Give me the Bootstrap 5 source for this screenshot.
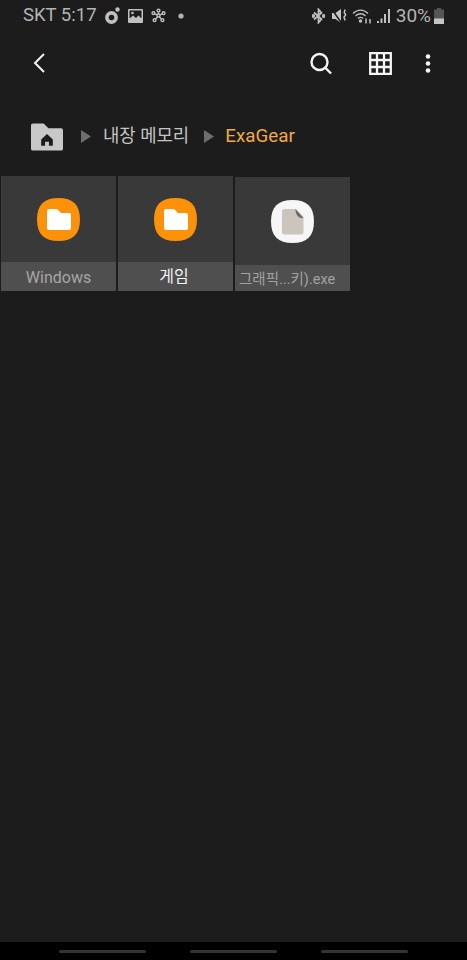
<!DOCTYPE html>
<html lang="ko">
<head>
  <meta charset="UTF-8">
  <title>내장 메모리 - ExaGear</title>
  <link href="https://cdn.jsdelivr.net/npm/bootstrap@5.3.3/dist/css/bootstrap.min.css" rel="stylesheet">
  <style>
    html, body { background: #1c1c1c; }
    body { font-family: Roboto, "Noto Sans CJK KR", sans-serif; }
    svg { display: block; flex: none; }
    .phone { width: 467px; height: 960px; overflow: hidden; }
    .status-bar { height: 31px; padding: 0 23px; color: #b4b4b4; font-size: 18.5px; line-height: 31px; }
    .status-left { gap: 8px; }
    .sr-mute { margin-left: 7px; }
    .sr-wifi { margin-left: 5px; }
    .sr-signal { margin-left: 5px; }
    .sr-pct { margin-left: 6px; font-size: 19px; }
    .sr-batt { margin-left: 3px; }
    .tool-bar { height: 64px; padding: 0 36px 0 33px; }
    .tool-grid { margin: 0 33px 0 37px; }
    .crumbs { height: 41px; margin-top: 21px; padding-left: 31px; font-size: 17.8px; color: #c4c4c4; }
    .crumb-arrow { margin: 0 12px 0 18px; }
    .crumb-arrow-2 { margin: 0 11px 0 15px; }
    .crumb-now { color: #f0a94a; font-size: 18.8px; }
    .tile-row { margin-top: 19px; padding-left: 1px; gap: 2px; }
    .tile { width: 115px; height: 115px; background: #393939; }
    .tile-low { height: 114px; margin-top: 1px; }
    .tile-label { height: 29px; background: #4f4f4f; color: #a6a6a6; font-size: 16px; line-height: 31px; text-align: center; white-space: nowrap; }
    .tile-low .tile-label { height: 26px; line-height: 29px; font-size: 14.5px; color: #a2a2a2; text-align: left; padding-left: 4px; }
    .tile-label-on { color: #f2f2f2; line-height: 29px; padding-right: 3px; }
    .nav-strip { height: 18px; background: #000; padding: 0 59px; }
    .nav-line { width: 87px; height: 3px; border-radius: 2px; background: #333; margin-top: 8px; }
  </style>
</head>
<body>

<div class="phone d-flex flex-column">

  <!-- status bar -->
  <div class="status-bar d-flex justify-content-between align-items-center">
    <div class="status-left d-flex align-items-center">
      <span>SKT 5:17</span>
      <svg width="15" height="17" viewBox="0 0 15 17"><circle cx="6.500" cy="10.500" r="4.600" fill="none" stroke="#c0c0c0" stroke-width="3.600"/><circle cx="12.500" cy="2.500" r="2.200" fill="#c0c0c0"/></svg>
      <svg width="15" height="14" viewBox="0 0 15 14"><rect width="15" height="14" rx="1" fill="#c0c0c0"/><rect x="1.500" y="1.500" width="12" height="7.500" fill="#1c1c1c"/><circle cx="4.500" cy="4" r="1.300" fill="#c0c0c0"/><path d="M1 10 5 6.500 8 9 10.500 6.500 14 10Z" fill="#c0c0c0"/></svg>
      <svg width="15" height="15" viewBox="0 0 16 15" fill="none" stroke="#c0c0c0" stroke-width="1.500"><circle cx="8" cy="7.500" r="1.600"/><circle cx="8" cy="2.200" r="1.500"/><circle cx="2.600" cy="5" r="1.500"/><circle cx="13.400" cy="5" r="1.500"/><circle cx="3.800" cy="12.500" r="1.500"/><circle cx="12.200" cy="12.500" r="1.500"/><path d="M8 4v2M4 5.800l2.600 1M12 5.800l-2.600 1M5 11.400l2-2.500M11 11.400l-2-2.500"/></svg>
      <svg class="ms-1" width="6" height="6" viewBox="0 0 6 6"><circle cx="3" cy="3" r="2.600" fill="#b4b4b4"/></svg>
    </div>
    <div class="d-flex align-items-center">
      <svg width="13" height="16" viewBox="0 0 13 16" fill="none" stroke="#c0c0c0" stroke-width="1.800"><path d="M2 4.500 9.500 11 6.500 14.500V1.500L9.500 5 2 11.500"/><circle cx="1.200" cy="8" r="1" fill="#c0c0c0"/><circle cx="11.800" cy="8" r="1" fill="#c0c0c0"/></svg>
      <svg class="sr-mute" width="15" height="16" viewBox="0 0 15 16"><path d="M0 5h3.500L9 1v14l-5.500-4H0Z" fill="#c4c4c4"/><path d="M0 1.500 9.500 15" stroke="#1c1c1c" stroke-width="1.500"/><path d="M12.500 1.500c1.800 1.300-1.400 2.400 0 3.600s1.600 2.100-.1 3.300 1.700 2.400.1 4.200" fill="none" stroke="#c4c4c4" stroke-width="1.500"/></svg>
      <svg class="sr-wifi" width="20" height="16" viewBox="0 0 20 16" fill="none" stroke="#c0c0c0" stroke-width="1.300"><path d="M1 5.500C5.500 1 11.500 1 16 5.500M3.500 8c3-3 7-3 10 0M6 10.500c1.600-1.600 3.400-1.600 5 0"/><circle cx="8.500" cy="13" r="1.100" fill="#c0c0c0"/><path d="M14 10.500v5M18 11v4.500" stroke-width="1.500"/></svg>
      <svg class="sr-signal" width="13" height="14" viewBox="0 0 13 14" fill="#c0c0c0"><rect x="0" y="12" width="2" height="2"/><rect x="3.500" y="9.500" width="2" height="4.500"/><rect x="7" y="5" width="2" height="9"/><rect x="11" y="0" width="2" height="14"/></svg>
      <span class="sr-pct">30%</span>
      <svg class="sr-batt" width="10" height="16" viewBox="0 0 10 16"><path d="M3 0h4v1.500H10V16H0V1.500H3Z" fill="#555"/><rect y="10.500" width="10" height="5.500" fill="#c4c4c4"/></svg>
    </div>
  </div>

  <!-- toolbar -->
  <div class="tool-bar d-flex align-items-center">
    <svg class="me-auto" width="12" height="20" viewBox="0 0 12 20" fill="none" stroke="#f4f4f4" stroke-width="2"><path d="M11 1 2 10l9 9"/></svg>
    <svg width="22" height="23" viewBox="0 0 22 23" fill="none" stroke="#f4f4f4" stroke-width="2.400"><circle cx="9.500" cy="10" r="8"/><path d="m15 15.500 6 6"/></svg>
    <svg class="tool-grid" width="23" height="23" viewBox="0 0 23 23" fill="none" stroke="#f4f4f4" stroke-width="2.300"><path d="M1.200 1.200h20.600v20.600H1.200ZM8 1v21M15 1v21M1 8h21M1 15h21"/></svg>
    <svg width="6" height="19" viewBox="0 0 6 19" fill="#f4f4f4"><circle cx="3" cy="2.500" r="2.300"/><circle cx="3" cy="9.500" r="2.300"/><circle cx="3" cy="16.500" r="2.300"/></svg>
  </div>

  <!-- breadcrumb -->
  <div class="crumbs d-flex align-items-center">
    <svg width="32" height="28" viewBox="0 0 33 28"><path d="M2 0h11l5 5h13a2 2 0 0 1 2 2v19a2 2 0 0 1-2 2H2a2 2 0 0 1-2-2V2a2 2 0 0 1 2-2Z" fill="#c8c8c8"/><path d="M16.500 11 10.500 16.500V23h4v-4h4v4h4v-6.500Z" fill="#1c1c1c"/></svg>
    <svg class="crumb-arrow" width="10" height="13" viewBox="0 0 10 13"><path d="M0 0 10 6.500 0 13Z" fill="#6e6e6e"/></svg>
    <span>내장 메모리</span>
    <svg class="crumb-arrow-2" width="10" height="13" viewBox="0 0 10 13"><path d="M0 0 10 6.500 0 13Z" fill="#6e6e6e"/></svg>
    <span class="crumb-now">ExaGear</span>
  </div>

  <!-- files -->
  <div class="tile-row d-flex align-items-start">
    <div class="tile d-flex flex-column">
      <div class="flex-grow-1 d-flex align-items-center justify-content-center">
        <svg width="43" height="43" viewBox="0 0 43 43"><path d="M21.500 0C36 0 43 7 43 21.500S36 43 21.500 43 0 36 0 21.500 7 0 21.500 0Z" fill="#fb9209"/><path d="M10 13a2 2 0 0 1 2-2h8l4 4h8a2 2 0 0 1 2 2v13a2 2 0 0 1-2 2H12a2 2 0 0 1-2-2Z" fill="#fff"/></svg>
      </div>
      <div class="tile-label">Windows</div>
    </div>
    <div class="tile d-flex flex-column">
      <div class="flex-grow-1 d-flex align-items-center justify-content-center">
        <svg width="43" height="43" viewBox="0 0 43 43"><path d="M21.500 0C36 0 43 7 43 21.500S36 43 21.500 43 0 36 0 21.500 7 0 21.500 0Z" fill="#fb9209"/><path d="M10 13a2 2 0 0 1 2-2h8l4 4h8a2 2 0 0 1 2 2v13a2 2 0 0 1-2 2H12a2 2 0 0 1-2-2Z" fill="#fff"/></svg>
      </div>
      <div class="tile-label tile-label-on">게임</div>
    </div>
    <div class="tile tile-low d-flex flex-column">
      <div class="flex-grow-1 d-flex align-items-center justify-content-center">
        <svg width="43" height="43" viewBox="0 0 43 43"><path d="M21.500 0C36 0 43 7 43 21.500S36 43 21.500 43 0 36 0 21.500 7 0 21.500 0Z" fill="#f6f6f6"/><path d="M13.500 9H25l7.500 8v15a2.500 2.500 0 0 1-2.500 2.500H13.500A2.500 2.500 0 0 1 11 32V11.500A2.500 2.500 0 0 1 13.500 9Z" fill="#cbc5be"/><path d="M24.500 9 32.500 18c-5 .5-8-3-8-9Z" fill="#6f6962"/></svg>
      </div>
      <div class="tile-label">그래픽...키).exe</div>
    </div>
  </div>

  <div class="flex-grow-1"></div>

  <!-- system nav -->
  <div class="nav-strip d-flex justify-content-between align-items-start">
    <div class="nav-line"></div>
    <div class="nav-line"></div>
    <div class="nav-line"></div>
  </div>
</div>

<script src="https://cdn.jsdelivr.net/npm/bootstrap@5.3.3/dist/js/bootstrap.bundle.min.js"></script>
</body>
</html>
